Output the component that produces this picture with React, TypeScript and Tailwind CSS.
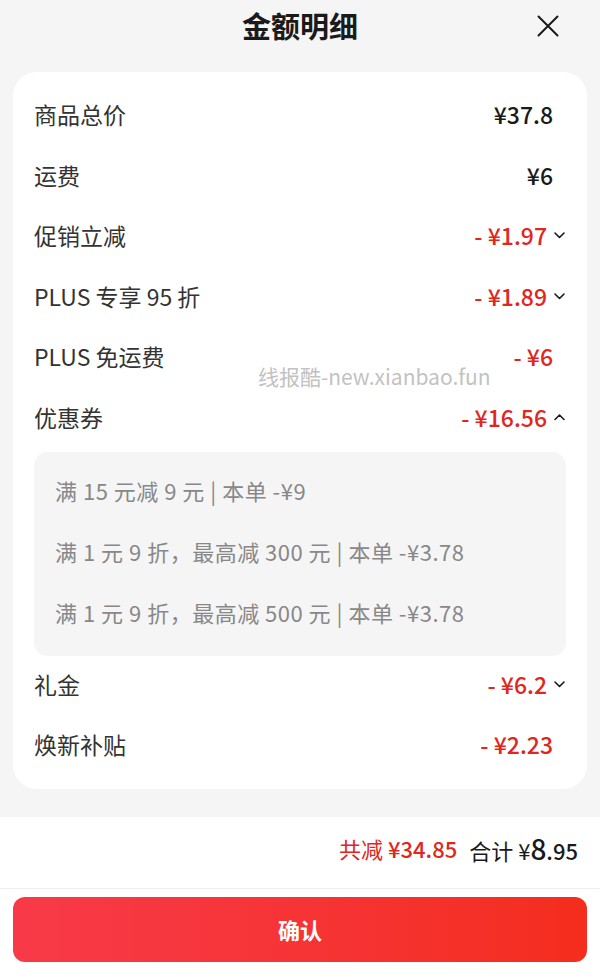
const font = { fontFamily: '"Noto Sans CJK SC", "Noto Sans", sans-serif' };

type Row = {
  label: string;
  value: string;
  red?: boolean;
  chevron?: "down" | "up";
};

const Chevron: React.FC<{ dir: "down" | "up" }> = ({ dir }) => (
  <svg width="13" height="8" viewBox="0 0 13 8" className="ml-[6px]" fill="none">
    <path
      d={dir === "down" ? "M2 2l4.5 4.5L11 2" : "M2 6.5L6.5 2 11 6.5"}
      stroke="#1a1a1a"
      strokeWidth="1.6"
      strokeLinecap="round"
      strokeLinejoin="round"
    />
  </svg>
);

const DetailRow: React.FC<{ row: Row }> = ({ row }) => (
  <div className="flex items-center justify-between h-[60.6px]">
    <span className="text-[23px] text-[#333]">{row.label}</span>
    <div className={row.chevron ? "flex items-center" : "flex items-center pr-[13px]"}>
      <span className={row.red ? "text-[23px] font-medium text-[#e1261c]" : "text-[23px] font-medium text-[#1a1a1a]"}>
        {row.value}
      </span>
      {row.chevron && <Chevron dir={row.chevron} />}
    </div>
  </div>
);

const topRows: Row[] = [
  { label: "商品总价", value: "¥37.8" },
  { label: "运费", value: "¥6" },
  { label: "促销立减", value: "- ¥1.97", red: true, chevron: "down" },
  { label: "PLUS 专享 95 折", value: "- ¥1.89", red: true, chevron: "down" },
  { label: "PLUS 免运费", value: "- ¥6", red: true },
  { label: "优惠券", value: "- ¥16.56", red: true, chevron: "up" },
];

const coupons = [
  "满 15 元减 9 元 | 本单 -¥9",
  "满 1 元 9 折，最高减 300 元 | 本单 -¥3.78",
  "满 1 元 9 折，最高减 500 元 | 本单 -¥3.78",
];

const bottomRows: Row[] = [
  { label: "礼金", value: "- ¥6.2", red: true, chevron: "down" },
  { label: "焕新补贴", value: "- ¥2.23", red: true },
];

export default function App() {
  return (
    <div className="relative w-full h-[976px] bg-[#f5f5f5] flex flex-col overflow-hidden" style={font}>
      <div className="relative h-[54px] flex items-center justify-center pb-[4px]">
        <h1 className="text-[29px] font-bold text-[#1a1a1a] leading-none">金额明细</h1>
        <button className="absolute right-[41px] top-[15px] w-[22px] h-[22px]">
          <svg viewBox="0 0 22 22" width="22" height="22" fill="none">
            <path d="M1.5 1.5l19 19M20.5 1.5l-19 19" stroke="#1a1a1a" strokeWidth="2" strokeLinecap="round" />
          </svg>
        </button>
      </div>

      <div className="mx-[13px] mt-[18px] bg-white rounded-[24px] px-[21px] pt-[12px] pb-[14px]">
        {topRows.map((r) => (
          <DetailRow key={r.label} row={r} />
        ))}
        <div className="mt-[4px] bg-[#f5f5f5] rounded-[14px] px-[21px] pt-[8.5px] pb-[12.5px]">
          {coupons.map((c) => (
            <div key={c} className="h-[61px] flex items-center text-[22px] tracking-[0.5px] text-[#888]">
              {c}
            </div>
          ))}
        </div>
        <div className="-mt-[2px]">
          {bottomRows.map((r) => (
            <DetailRow key={r.label} row={r} />
          ))}
        </div>
      </div>

      <div className="mt-[28px] bg-white flex-1 flex flex-col">
        <div className="h-[72px] flex items-center justify-end pr-[22px] pb-[8px] border-b border-[#eeeeee]">
          <span className="text-[22px] text-[#e1261c]">
            共减 <span className="font-medium">¥34.85</span>
          </span>
          <span className="ml-[12px] text-[22px] text-[#1a1a1a]">
            合计 ¥<span className="text-[28px] font-medium">8</span>
            <span className="font-medium">.95</span>
          </span>
        </div>
        <div className="px-[13px] pt-[8px]">
          <button className="w-full h-[65px] rounded-[12px] bg-gradient-to-r from-[#f83a48] to-[#f42d1c] text-white text-[22px] font-bold">
            确认
          </button>
        </div>
      </div>

      <div className="absolute left-[258px] top-[366px] text-[21px] text-[#c2c2c2] leading-none pointer-events-none">
        线报酷-new.xianbao.fun
      </div>
    </div>
  );
}
